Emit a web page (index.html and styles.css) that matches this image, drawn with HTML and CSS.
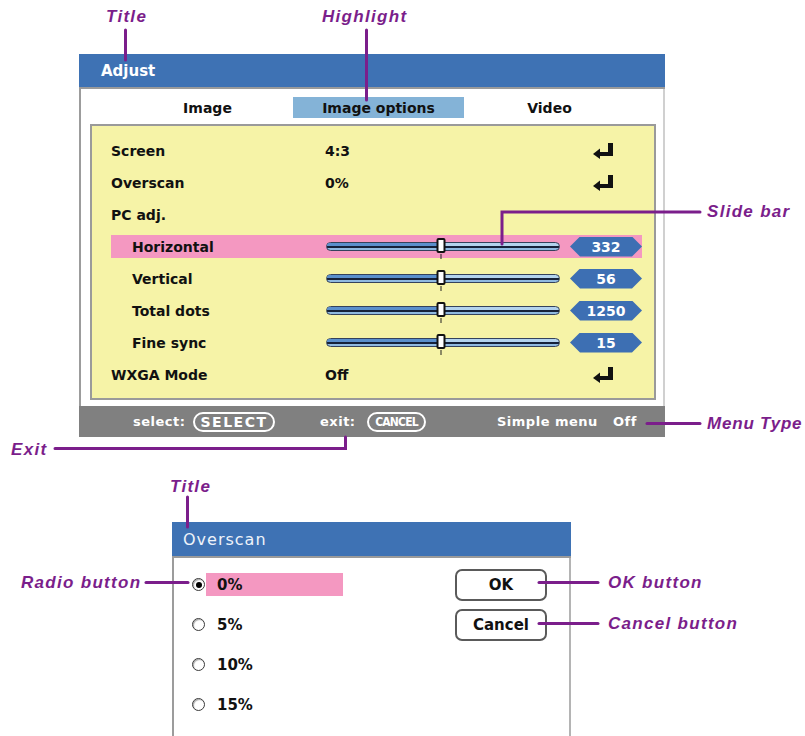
FILE: index.html
```html
<!DOCTYPE html>
<html lang="en">
  <head>
    <meta charset="UTF-8" />
    <meta name="viewport" content="width=device-width, initial-scale=1" />
    <title>Adjust menu</title>
    <link rel="stylesheet" href="styles.css">
  </head>
  <body>
    <div class="figure">
      <section class="window adjust">
        <div class="titlebar">Adjust</div>
        <div class="window-body">
          <div class="tabs">
            <span class="tab">Image</span>
            <span class="tab active">Image options</span>
            <span class="tab">Video</span>
          </div>

          <div class="panel">
            <div class="row">
              <span class="label">Screen</span>
              <span class="value">4:3</span>
              <svg class="enter" viewBox="0 0 20 16"><rect x="15" y="0" width="5" height="13" /><rect x="6" y="9" width="14" height="4" /><polygon points="0,11 7,5.5 7,16" /></svg>
            </div>
            <div class="row">
              <span class="label">Overscan</span>
              <span class="value">0%</span>
              <svg class="enter" viewBox="0 0 20 16"><rect x="15" y="0" width="5" height="13" /><rect x="6" y="9" width="14" height="4" /><polygon points="0,11 7,5.5 7,16" /></svg>
            </div>
            <div class="row">
              <span class="label">PC adj.</span>
            </div>
            <div class="row sub selected">
              <span class="label">Horizontal</span>
              <div class="slider"><span class="fill" style="width: 49%"></span><span class="thumb" style="left: 49%"></span></div>
              <span class="badge">332</span>
            </div>
            <div class="row sub">
              <span class="label">Vertical</span>
              <div class="slider"><span class="fill" style="width: 49%"></span><span class="thumb" style="left: 49%"></span></div>
              <span class="badge">56</span>
            </div>
            <div class="row sub">
              <span class="label">Total dots</span>
              <div class="slider"><span class="fill" style="width: 49%"></span><span class="thumb" style="left: 49%"></span></div>
              <span class="badge">1250</span>
            </div>
            <div class="row sub">
              <span class="label">Fine sync</span>
              <div class="slider"><span class="fill" style="width: 49%"></span><span class="thumb" style="left: 49%"></span></div>
              <span class="badge">15</span>
            </div>
            <div class="row">
              <span class="label">WXGA Mode</span>
              <span class="value">Off</span>
              <svg class="enter" viewBox="0 0 20 16"><rect x="15" y="0" width="5" height="13" /><rect x="6" y="9" width="14" height="4" /><polygon points="0,11 7,5.5 7,16" /></svg>
            </div>
          </div>
        </div>

        <div class="statusbar">
          <span class="hint select-hint">select:</span>
          <span class="pill select">SELECT</span>
          <span class="hint exit-hint">exit:</span>
          <span class="pill cancel">CANCEL</span>
          <span class="hint menu-hint">Simple menu</span>
          <span class="hint">Off</span>
        </div>
      </section>

      <section class="window dialog">
        <div class="titlebar">Overscan</div>
        <div class="dialog-body">
          <div class="options">
            <div class="option">
              <span class="radio checked"></span>
              <span class="option-label selected">0%</span>
            </div>
            <div class="option">
              <span class="radio"></span>
              <span class="option-label">5%</span>
            </div>
            <div class="option">
              <span class="radio"></span>
              <span class="option-label">10%</span>
            </div>
            <div class="option">
              <span class="radio"></span>
              <span class="option-label">15%</span>
            </div>
          </div>
          <div class="buttons">
            <button class="btn">OK</button>
            <button class="btn">Cancel</button>
          </div>
        </div>
      </section>

      <!-- callout leader lines -->
      <svg class="leaders" viewBox="0 0 805 736">
        <path d="M125.5 30 V60" />
        <path d="M366.5 30 V100" />
        <path d="M700 212 H502 V244" />
        <path d="M647 423.5 H700" />
        <path d="M55 448.5 H345.5 V437" />
        <path d="M187.5 497 V527" />
        <path d="M146 582.5 H188" />
        <path d="M539 582.5 H598" />
        <path d="M539 623.5 H598" />
      </svg>

      <span class="note note-title">Title</span>
      <span class="note note-highlight">Highlight</span>
      <span class="note note-slide">Slide bar</span>
      <span class="note note-menu">Menu Type</span>
      <span class="note note-exit">Exit</span>
      <span class="note note-dtitle">Title</span>
      <span class="note note-radio">Radio button</span>
      <span class="note note-ok">OK button</span>
      <span class="note note-cancel">Cancel button</span>
    </div>
  </body>
</html>
```

FILE: styles.css
```css
html,
body {
  margin: 0;
  padding: 0;
  overflow: hidden;
  background: #fff;
}
body {
  font-family: "DejaVu Sans", Verdana, sans-serif;
  color: #111;
}
.figure {
  position: relative;
  width: 805px;
  height: 736px;
  overflow: hidden;
}

/* windows */
.window {
  box-sizing: border-box;
}
.titlebar {
  background: #3e72b4;
  color: #fff;
  border-bottom: 2px solid #9a9a9a;
  display: flex;
  align-items: center;
}
.adjust {
  width: 586px;
  margin: 54px 0 0 79px;
}
.adjust .titlebar {
  height: 33px;
  padding-left: 22px;
  font-size: 15px;
  font-weight: bold;
}
.window-body {
  border-left: 2px solid #9c9c9c;
  border-right: 2px solid #d0d0d0;
  padding: 8px 0 6px 0;
}
.tabs {
  display: flex;
  height: 21px;
  padding-left: 41px;
  margin-bottom: 6px;
}
.tab {
  width: 171px;
  display: flex;
  align-items: center;
  justify-content: center;
  font-size: 14px;
  font-weight: bold;
}
.tab.active {
  background: #84b3d7;
}

/* yellow panel */
.panel {
  width: 566px;
  margin-left: 9px;
  box-sizing: border-box;
  background: #f6f3a7;
  border: 2px solid #9a9a9a;
  padding: 13px 12px 12px 19px;
  display: flex;
  flex-direction: column;
  gap: 9px;
}
.row {
  display: flex;
  align-items: center;
  height: 23px;
  font-size: 14px;
  font-weight: bold;
}
.row.selected {
  background: #f498c1;
}
.label {
  width: 214px;
  flex: none;
  box-sizing: border-box;
}
.row.sub .label {
  padding-left: 21px;
}
.value {
  flex: 1;
}
.enter {
  width: 20px;
  height: 16px;
  margin-right: 29px;
  fill: #111;
}

/* slide bar */
.slider {
  position: relative;
  width: 234px;
  height: 9px;
  margin-left: 1px;
  box-sizing: border-box;
  border: 1px solid #34425c;
  border-radius: 5px;
  background: linear-gradient(#b3d3ee 0 3px, #15213a 3px 5px, #8fb9e0 5px);
}
.fill {
  position: absolute;
  left: 0;
  top: 0;
  height: 3px;
  background: #5a8fcc;
  border-radius: 4px 0 0 0;
}
.thumb {
  position: absolute;
  top: -5px;
  width: 9px;
  height: 15px;
  box-sizing: border-box;
  transform: translateX(-50%);
  background: #fff;
  border: 2px solid #111;
  border-radius: 2px;
}
.thumb::after {
  content: "";
  position: absolute;
  left: 2px;
  top: 14px;
  width: 1px;
  height: 5px;
  background: #222;
}
.badge {
  width: 72px;
  height: 20px;
  margin-left: auto;
  display: flex;
  align-items: center;
  justify-content: center;
  background: #3d6fb3;
  color: #fff;
  font-size: 14px;
  clip-path: polygon(0 50%, 10px 0, calc(100% - 10px) 0, 100% 50%, calc(100% - 10px) 100%, 10px 100%);
}

/* status bar */
.statusbar {
  height: 31px;
  background: #808080;
  color: #fff;
  display: flex;
  align-items: center;
  padding-left: 54px;
  font-size: 13px;
  font-weight: bold;
  letter-spacing: 0.5px;
}
.select-hint {
  width: 60px;
}
.exit-hint {
  width: 47px;
}
.menu-hint {
  width: 116px;
}
.pill {
  height: 20px;
  box-sizing: border-box;
  border: 2px solid #fff;
  border-radius: 10px;
  display: flex;
  align-items: center;
  justify-content: center;
}
.pill.select {
  width: 82px;
  margin-right: 45px;
  letter-spacing: 1.5px;
  font-size: 14px;
}
.pill.cancel {
  width: 59px;
  margin-right: 71px;
  font-family: "DejaVu Sans Condensed", "DejaVu Sans", sans-serif;
  font-weight: bold;
  font-size: 12px;
  letter-spacing: -0.8px;
}

/* overscan dialog */
.dialog {
  width: 399px;
  margin: 85px 0 0 172px;
}
.dialog .titlebar {
  height: 34px;
  padding-left: 11px;
  font-size: 16px;
  letter-spacing: 1px;
  color: #eef3fa;
}
.dialog-body {
  height: 178px;
  box-sizing: border-box;
  border-left: 2px solid #9c9c9c;
  border-right: 2px solid #b4b4b4;
  padding: 15px 22px 0 18px;
  display: flex;
  justify-content: space-between;
}
.options {
  display: flex;
  flex-direction: column;
  gap: 17px;
}
.option {
  display: flex;
  align-items: center;
  height: 23px;
}
.radio {
  width: 13px;
  height: 13px;
  box-sizing: border-box;
  border: 1.5px solid #3a3a3a;
  border-radius: 50%;
  margin-right: 1px;
  background: #fff;
  box-shadow: inset 1px 1px 1px #aaa;
  display: flex;
  align-items: center;
  justify-content: center;
}
.radio.checked::after {
  content: "";
  width: 6px;
  height: 6px;
  border-radius: 50%;
  background: #000;
}
.option-label {
  width: 137px;
  height: 23px;
  box-sizing: border-box;
  padding-left: 11px;
  display: flex;
  align-items: center;
  font-size: 15px;
  font-weight: bold;
}
.option-label.selected {
  background: #f498c1;
}
.buttons {
  display: flex;
  flex-direction: column;
  gap: 8px;
  margin-top: -4px;
}
.btn {
  width: 92px;
  height: 32px;
  box-sizing: border-box;
  border: 2px solid #5a5a5a;
  border-radius: 7px;
  background: #fff;
  color: #111;
  font-family: inherit;
  font-size: 15px;
  font-weight: bold;
  padding: 0;
}

/* callouts */
.leaders {
  position: absolute;
  left: 0;
  top: 0;
  width: 805px;
  height: 736px;
  fill: none;
  stroke: #7b1e8b;
  stroke-width: 3;
  stroke-linecap: round;
  pointer-events: none;
}
.note {
  position: absolute;
  line-height: 20px;
  font-family: "Liberation Sans", Arial, sans-serif;
  font-size: 17px;
  font-weight: bold;
  font-style: italic;
  letter-spacing: 1.3px;
  color: #7b1e8b;
  white-space: nowrap;
}
.note-title {
  left: 106px;
  top: 7px;
}
.note-highlight {
  left: 322px;
  top: 7px;
}
.note-slide {
  left: 707px;
  top: 202px;
}
.note-menu {
  left: 707px;
  top: 414px;
  letter-spacing: 0.8px;
}
.note-exit {
  left: 11px;
  top: 440px;
}
.note-dtitle {
  left: 170px;
  top: 477px;
}
.note-radio {
  left: 21px;
  top: 573px;
}
.note-ok {
  left: 608px;
  top: 573px;
}
.note-cancel {
  left: 608px;
  top: 614px;
}
```
